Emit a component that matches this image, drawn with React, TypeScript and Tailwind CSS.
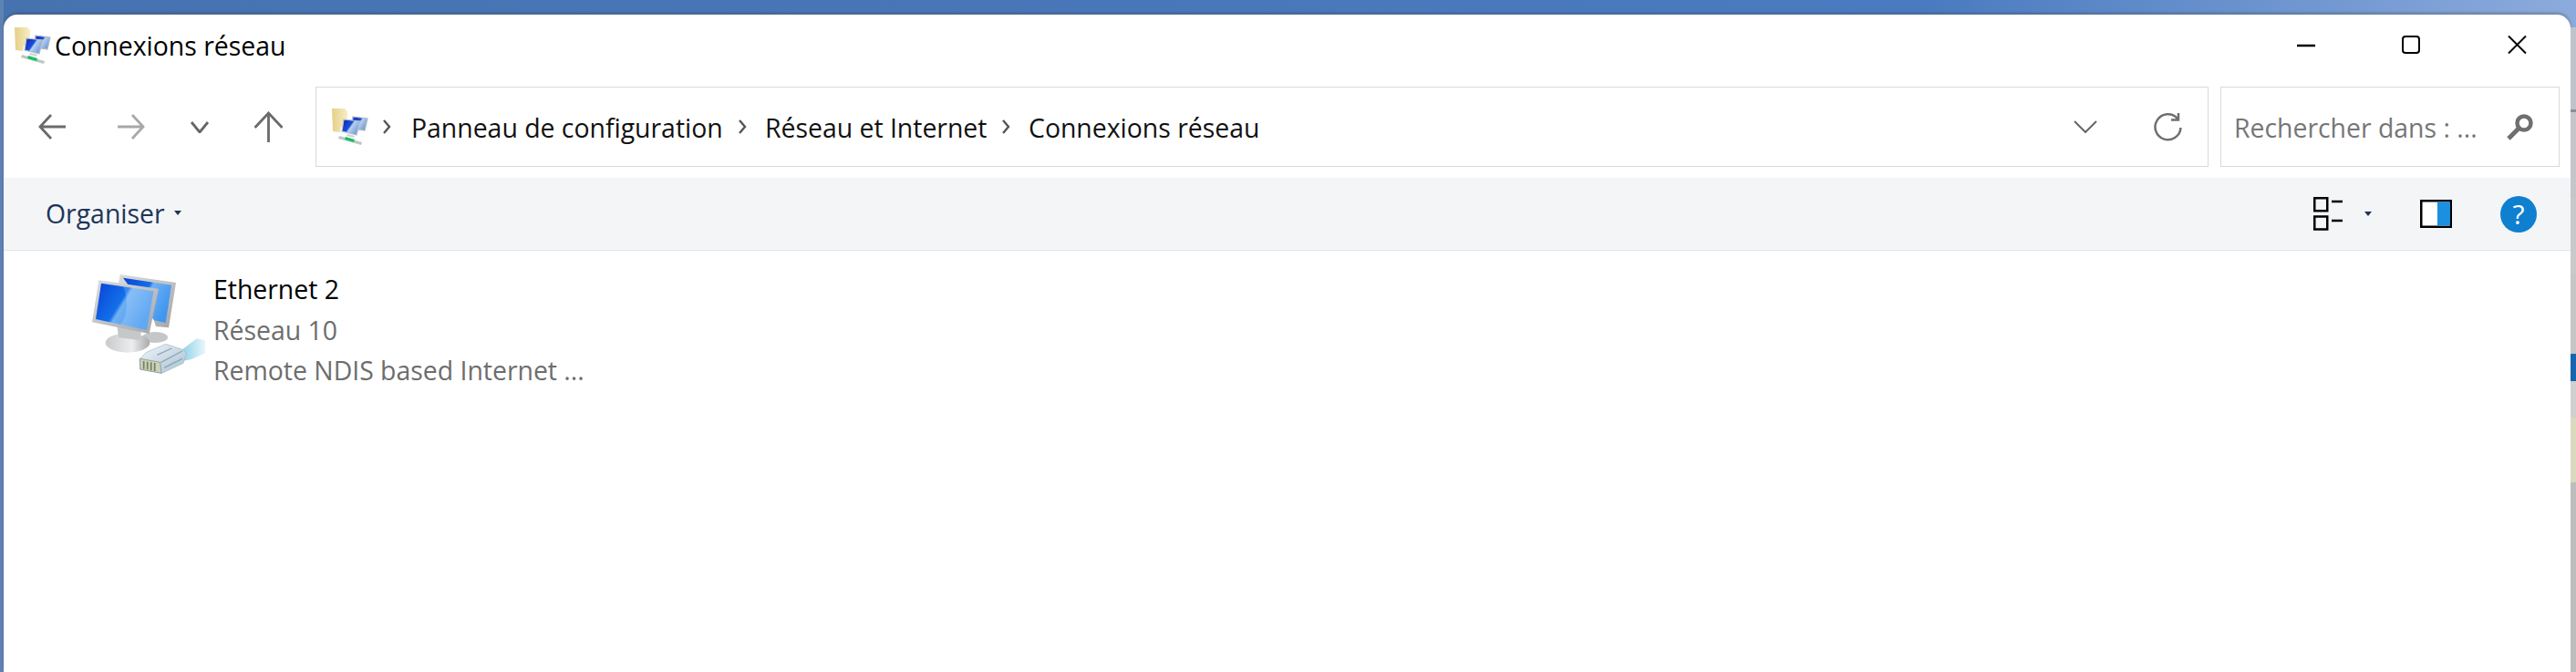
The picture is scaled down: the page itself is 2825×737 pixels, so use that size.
import React from "react";

const font = "[font-family:'Open_Sans','Noto_Sans',sans-serif]";

function SmallNet({ id, cls }: { id: string; cls?: string }) {
  return (
    <svg width="40" height="40" viewBox="0 0 40 40" className={"shrink-0 " + (cls ?? "")}>
      <defs>
        <linearGradient id={id + "f"} x1="0" y1="0" x2="1" y2="0">
          <stop offset="0" stopColor="#e6cf86" />
          <stop offset="1" stopColor="#f6eec6" />
        </linearGradient>
        <linearGradient id={id + "s"} x1="0" y1="0" x2="1" y2="0.6">
          <stop offset="0" stopColor="#0a23b8" />
          <stop offset="0.5" stopColor="#1b4fd8" />
          <stop offset="0.58" stopColor="#b7d0f0" />
          <stop offset="1" stopColor="#6f9ad6" />
        </linearGradient>
      </defs>
      <path d="M0 0 L14 0 L17 3 L17 15 L10 20 L9 26 L1 25 Z" fill={`url(#${id}f)`} />
      <path d="M23 9 L39 11 L36 24 L22 22 Z" fill={`url(#${id}s)`} stroke="#aeb8c6" strokeWidth="1.2" />
      <path d="M13 12 L31 14 L27 29 L11 25 Z" fill={`url(#${id}s)`} stroke="#b9c0ca" strokeWidth="1.2" />
      <path d="M17 28 L25 30 L24 32 L16 30 Z" fill="#cfd3d8" />
      <path d="M8 30 L33 37 L32 40 L7 33 Z" fill="#bcc8c2" />
      <path d="M15 31 L25 34 L24 37 L14 34 Z" fill="#16c060" />
    </svg>
  );
}

function BigNet() {
  return (
    <svg width="140" height="130" viewBox="0 0 420 390" className="shrink-0">
      <defs>
        <linearGradient id="scr" x1="0" y1="0" x2="1" y2="0.5">
          <stop offset="0" stopColor="#0a42d4" />
          <stop offset="0.5" stopColor="#1270ea" />
          <stop offset="0.56" stopColor="#6fb0f4" />
          <stop offset="1" stopColor="#3f96f0" />
        </linearGradient>
        <linearGradient id="frm" x1="0" y1="0" x2="1" y2="1">
          <stop offset="0" stopColor="#dcdde0" />
          <stop offset="1" stopColor="#a4a6aa" />
        </linearGradient>
        <linearGradient id="bas" x1="0" y1="0" x2="1" y2="0">
          <stop offset="0" stopColor="#c8cacc" />
          <stop offset="0.6" stopColor="#ecedee" />
          <stop offset="1" stopColor="#a6a8aa" />
        </linearGradient>
        <linearGradient id="cab" x1="0" y1="0" x2="1" y2="0">
          <stop offset="0" stopColor="#8fd3e8" />
          <stop offset="1" stopColor="#e9f6fa" />
        </linearGradient>
        <linearGradient id="plg" x1="0" y1="0" x2="1" y2="1">
          <stop offset="0" stopColor="#f2f6f9" />
          <stop offset="1" stopColor="#a7c1d4" />
        </linearGradient>
      </defs>
      <ellipse cx="255" cy="240" rx="42" ry="18" fill="#c4c6c8" />
      <path d="M140 33 L324 60 L300 208 L258 204 L250 180 L130 90 Z" fill="url(#frm)" />
      <path d="M150 44 L309 68 L290 192 L252 184 Z" fill="url(#scr)" />
      <ellipse cx="165" cy="258" rx="73" ry="32" fill="url(#bas)" />
      <path d="M130 200 L210 218 L205 250 L135 240 Z" fill="#c5c7c9" />
      <path d="M70 52 L267 80 L236 228 L48 190 Z" fill="url(#frm)" />
      <path d="M78 62 L250 88 L228 216 L60 180 Z" fill="url(#scr)" />
      <path d="M150 73 L250 88 L228 216 L142 198 C168 160 168 110 150 73 Z" fill="#ffffff" fillOpacity="0.18" />
      <path d="M345 280 L392 244 L420 250 L420 292 L375 312 L345 318 Z" fill="url(#cab)" />
      <path d="M204 312 L225 290 L290 262 L345 280 L358 292 L348 325 L278 358 L206 345 Z" fill="url(#plg)" stroke="#a5b5c0" strokeWidth="2" />
      <path d="M206 310 L272 322 L276 358 L206 345 Z" fill="#cfd0bd" stroke="#7d8a80" strokeWidth="2" />
      <path d="M218 318 L218 344 M230 320 L230 346 M242 322 L242 349 M254 324 L254 351" stroke="#6f8058" strokeWidth="5" />
      <path d="M275 322 L345 285 M262 298 L310 276 M285 340 L345 310" stroke="#8ea4b4" strokeWidth="4" fill="none" />
    </svg>
  );
}

function Crumb({ children, cls }: { children: React.ReactNode; cls?: string }) {
  return <span className={"mt-[2px] whitespace-nowrap text-[28.4px] leading-none text-[#111] " + (cls ?? "")}>{children}</span>;
}

function Sep({ cls }: { cls?: string }) {
  return (
    <svg width="10" height="18" viewBox="0 0 10 18" className={"shrink-0 " + (cls ?? "")}>
      <path d="M2 2 L8 9 L2 16" fill="none" stroke="#555" strokeWidth="2.4" />
    </svg>
  );
}

export default function App() {
  return (
    <div className={`flex h-[737px] w-[2825px] overflow-hidden bg-[linear-gradient(90deg,#4672b0_0%,#4a7bc0_75%,#8cabdc_100%)] ${font}`}>
      <div className="w-[4px] shrink-0 bg-[#5f82b5]" />
      <div className="mt-[16px] flex h-[721px] w-[2815px] shrink-0 flex-col rounded-t-[15px] bg-white shadow-[0_-2px_3px_rgba(70,70,70,0.4)]">
        <div className="flex h-[79px] shrink-0 items-start pl-[12px] pr-[48px] pt-[14px]">
          <SmallNet id="a" />
          <span className="ml-[4px] mt-[-2px] text-[28.4px] leading-[44px] text-black">Connexions réseau</span>
          <div className="ml-auto mt-[9px] flex items-start">
            <svg className="mt-[9px]" width="20" height="4" viewBox="0 0 20 4"><path d="M0 2 H20" stroke="#000" strokeWidth="2.5" /></svg>
            <svg className="ml-[95px]" width="20" height="20" viewBox="0 0 20 20"><rect x="1" y="1" width="18" height="18" rx="3" fill="none" stroke="#000" strokeWidth="2" /></svg>
            <svg className="ml-[96px]" width="21" height="20" viewBox="0 0 21 20"><path d="M1 0.5 L20 19.5 M20 0.5 L1 19.5" stroke="#000" strokeWidth="2" /></svg>
          </div>
        </div>
        <div className="flex h-[100px] shrink-0 items-start">
          <div className="flex h-[88px] w-[342px] shrink-0 items-center pl-[38px]">
            <svg width="30" height="28" viewBox="0 0 30 28"><path d="M30 14 H2 M14 1 L2 14 L14 27" fill="none" stroke="#6b6b6b" strokeWidth="2.8" /></svg>
            <svg className="ml-[57px]" width="30" height="28" viewBox="0 0 30 28"><path d="M0 14 H28 M16 1 L28 14 L16 27" fill="none" stroke="#a8a8a8" strokeWidth="2.8" /></svg>
            <svg className="ml-[49px]" width="22" height="13" viewBox="0 0 22 13"><path d="M2 1 L11 12 L20 1" fill="none" stroke="#666" strokeWidth="2.8" /></svg>
            <svg className="ml-[48px]" width="33" height="34" viewBox="0 0 33 34"><path d="M16.5 34 V2 M1.5 18 L16.5 2 L31.500 18" fill="none" stroke="#6b6b6b" strokeWidth="2.8" /></svg>
          </div>
          <div className="flex h-[88px] w-[2076px] shrink-0 items-center border border-[#d9d9d9] pl-[17px]">
            <SmallNet id="b" />
            <Sep cls="ml-[15px]" />
            <Crumb cls="ml-[22px] w-[342px]">Panneau de configuration</Crumb>
            <Sep cls="ml-[16px]" />
            <Crumb cls="ml-[20px] w-[242px]">Réseau et Internet</Crumb>
            <Sep cls="ml-[17px]" />
            <Crumb cls="ml-[20px]">Connexions réseau</Crumb>
            <svg className="ml-auto" width="26" height="14" viewBox="0 0 26 14"><path d="M1 1 L13 13 L25 1" fill="none" stroke="#666" strokeWidth="2" /></svg>
            <svg className="ml-[61px] mr-[28px]" width="32" height="32" viewBox="0 0 32 32">
              <path d="M27 7 A14 14 0 1 0 30.500 17 M28 1 V8.500 H20" fill="none" stroke="#6f6f6f" strokeWidth="2.5" />
            </svg>
          </div>
          <div className="ml-[13px] flex h-[88px] w-[372px] shrink-0 items-center border border-[#d9d9d9] pl-[14px]">
            <span className="mt-[2px] text-[28.4px] leading-none text-[#767676]">Rechercher dans : ...</span>
            <svg className="ml-auto mr-[28px]" width="29" height="29" viewBox="0 0 29 29">
              <circle cx="19" cy="10" r="7.500" fill="none" stroke="#6f6f6f" strokeWidth="4.500" />
              <path d="M13 16 L2 27" stroke="#6f6f6f" strokeWidth="5" />
            </svg>
          </div>
        </div>
        <div className="flex h-[80px] shrink-0 items-center border-b border-[#e4e5e7] bg-[#f4f5f7] pl-[46px]">
          <span className="text-[28.4px] leading-none text-[#1d3557]">Organiser</span>
          <svg className="mb-[3px] ml-[10px]" width="8" height="5" viewBox="0 0 8 5"><path d="M0 0 H8 L4 5 Z" fill="#1d3557" /></svg>
          <svg className="ml-auto" width="32" height="37" viewBox="0 0 32 37">
            <rect x="1.250" y="1.250" width="14" height="14" fill="none" stroke="#000" strokeWidth="2.500" />
            <rect x="1.250" y="21.500" width="14" height="14" fill="none" stroke="#000" strokeWidth="2.500" />
            <path d="M20 5 H32 M20 26 H32" stroke="#000" strokeWidth="2.500" />
          </svg>
          <svg className="ml-[24px]" width="8" height="5" viewBox="0 0 8 5"><path d="M0 0 H8 L4 5 Z" fill="#1d3557" /></svg>
          <svg className="ml-[53px]" width="35" height="31" viewBox="0 0 35 31">
            <rect x="1.250" y="1.250" width="32.500" height="28.500" fill="#fff" stroke="#000" strokeWidth="2.500" />
            <rect x="19" y="2.500" width="14" height="26" fill="#1b8fe0" />
          </svg>
          <div className="ml-[53px] mr-[37px] flex h-[40px] w-[40px] items-center justify-center rounded-full bg-[#0f7fd0] text-[30px] leading-none text-white">?</div>
        </div>
        <div className="flex min-h-0 flex-1 items-start pl-[81px] pt-[15px]">
          <BigNet />
          <div className="ml-[9px] mt-[5px] flex flex-col text-[28.4px] leading-[44.500px] text-[#6d6d6d]">
            <span className="text-black">Ethernet 2</span>
            <span>Réseau 10</span>
            <span>Remote NDIS based Internet ...</span>
          </div>
        </div>
      </div>
      <div className="flex w-[6px] shrink-0 flex-col">
        <div className="h-[30px] shrink-0" />
        <div className="h-[90px] shrink-0 bg-[#bfc4cb]" />
        <div className="h-[3px] shrink-0 bg-[#8a8f96]" />
        <div className="h-[95px] shrink-0 bg-[#c4c6c9]" />
        <div className="h-[82px] shrink-0 bg-[#c9c9c9]" />
        <div className="h-[88px] shrink-0 bg-[#c6c6c6]" />
        <div className="h-[30px] shrink-0 bg-[#1566ae]" />
        <div className="h-[40px] shrink-0 bg-[#d0d0d0]" />
        <div className="h-[71px] shrink-0 bg-[#d9d9bf]" />
        <div className="flex-1 bg-[#bdbdbd]" />
      </div>
    </div>
  );
}
